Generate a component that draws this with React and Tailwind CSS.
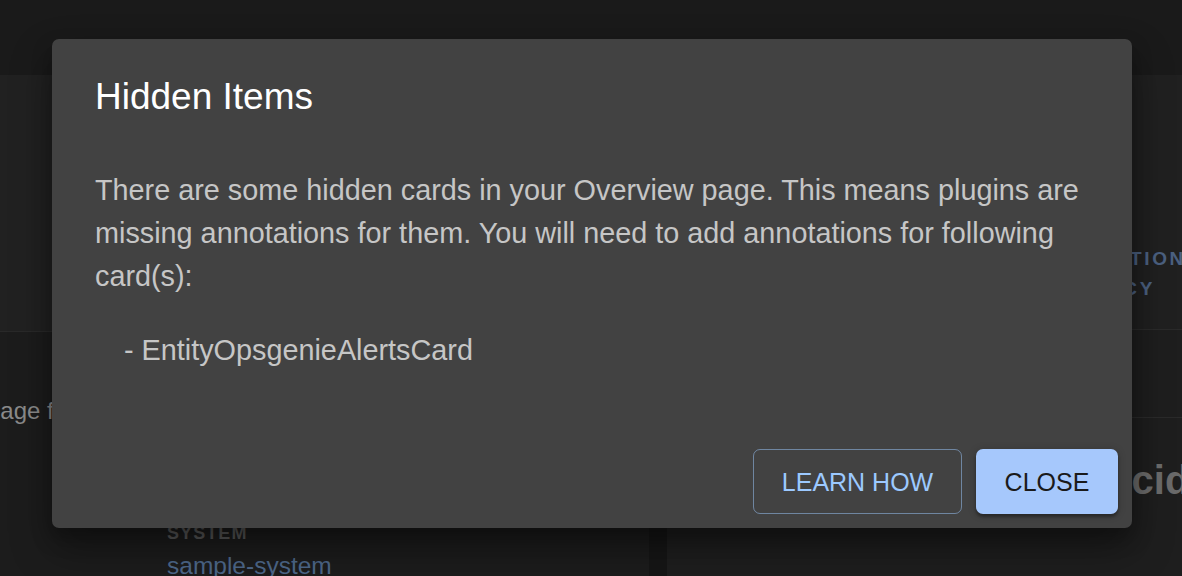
import React from 'react';

const HiddenItemsDialog = ({ cards = [], onLearnHow, onClose }) => (
  <div className="absolute inset-0 flex items-start justify-center pt-[39px] pl-[2px]">
    <div className="flex h-[489px] w-[1080px] flex-col rounded-[7px] bg-[#424242] shadow-[0_20px_40px_rgba(0,0,0,0.35),0_10px_20px_rgba(0,0,0,0.25)]">
      {/* Title */}
      <h2 className="px-[43px] pt-[29px] pb-[29px] text-[37px] font-medium leading-[57.6px] text-white">
        Hidden Items
      </h2>

      {/* Content */}
      <div className="px-[43px] pt-[14px] text-[28.8px] leading-[43.2px] text-[#c6c6c6]">
        <p>
          There are some hidden cards in your Overview page. This means plugins are
          missing annotations for them. You will need to add annotations for following
          card(s):
        </p>
        <ul className="mt-[31px] pl-[29px]">
          {cards.map(card => (
            <li key={card}>- {card}</li>
          ))}
        </ul>
      </div>

      {/* Actions */}
      <div className="mt-auto flex justify-end gap-[14px] p-[14px]">
        <button
          onClick={onLearnHow}
          className="flex h-[65px] w-[209px] items-center justify-center rounded-[7px] border border-[#9cc9ff]/50 pt-[3px] text-[25px] font-medium uppercase text-[#9cc9ff]"
        >
          Learn how
        </button>
        <button
          onClick={onClose}
          className="flex h-[65px] w-[142px] items-center justify-center rounded-[7px] bg-[#a6c8fc] pt-[3px] text-[25px] font-medium uppercase text-[#1a1a1a] shadow-[0_3px_3px_rgba(0,0,0,0.3),0_1px_8px_rgba(0,0,0,0.2)]"
        >
          Close
        </button>
      </div>
    </div>
  </div>
);

const App = () => {
  return (
    <div className="relative h-[576px] w-[1182px] overflow-hidden bg-[#1c1c1c] font-['Liberation_Sans',Arial,sans-serif]">
      {/* Page behind the dialog (dimmed) */}
      <div className="h-[75px] bg-[#1a1a1a]" />
      <div className="flex h-[501px]">
        {/* Left card */}
        <div className="flex w-[649px] shrink-0 flex-col">
          <div className="h-[257px] shrink-0 border-b border-[#292929] bg-[#212121]" />
          <div className="-ml-[13px] mt-[64px] shrink-0 whitespace-nowrap text-[24px] leading-[30px] text-[#8a8a8a]">
            page for this entity
          </div>
          <div className="mt-[96px] shrink-0 pl-[167px]">
            <div className="text-[18px] font-bold leading-[22px] tracking-[0.06em] text-[#5a5a5a]">SYSTEM</div>
            <div className="mt-[7px] text-[24.5px] leading-[30px] text-[#4d6789]">sample-system</div>
          </div>
        </div>

        <div className="w-[18px] shrink-0 bg-[#161616]" />

        {/* Right card */}
        <div className="flex min-w-0 flex-1 flex-col bg-[#1e1e1e]">
          <div className="flex h-[255px] shrink-0 flex-col items-end justify-end border-b border-[#2a2a2a] bg-[#202020] pb-[25px]">
            <div className="-mr-[4px] text-right text-[19px] font-bold leading-[30px] tracking-[0.14em] text-[#4b6080]">
              <div>APPLICATION</div>
              <div className="pr-[31px]">POLICY</div>
            </div>
          </div>
          <div className="h-[88px] shrink-0 border-b border-[#2a2a2a]" />
          <div className="mt-[38px] shrink-0 whitespace-nowrap pl-[429px] text-[40px] font-bold leading-[48px] text-[#6a6a6a]">
            Incidents
          </div>
        </div>
      </div>

      <HiddenItemsDialog cards={['EntityOpsgenieAlertsCard']} />
    </div>
  );
};

export default App;
